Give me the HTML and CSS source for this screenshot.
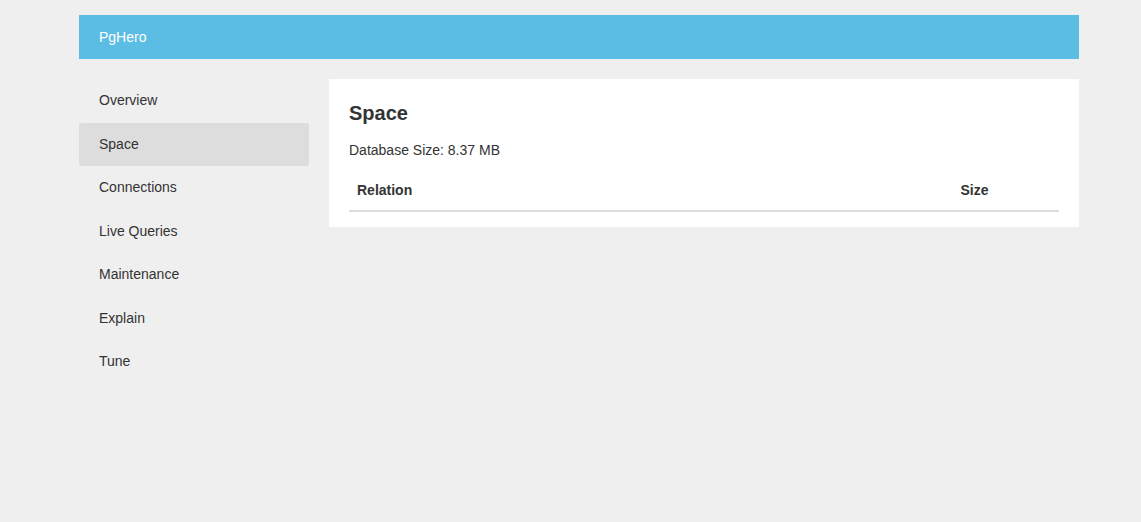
FILE: index.html
```html
<!DOCTYPE html>
<html>
<head>
<meta charset="utf-8">
<title>PgHero</title>
<link rel="stylesheet" href="styles.css">
</head>
<body>
<div class="container">
  <div class="header">PgHero</div>
  <div class="layout">
    <ul class="nav">
      <li><a class="nav-link">Overview</a></li>
      <li><a class="nav-link active">Space</a></li>
      <li><a class="nav-link">Connections</a></li>
      <li><a class="nav-link">Live Queries</a></li>
      <li><a class="nav-link">Maintenance</a></li>
      <li><a class="nav-link">Explain</a></li>
      <li><a class="nav-link">Tune</a></li>
    </ul>
    <div class="content">
      <h1 class="title">Space</h1>
      <p class="summary">Database Size: 8.37 MB</p>
      <table class="table">
        <thead>
          <tr>
            <th class="col-relation">Relation</th>
            <th class="col-size">Size</th>
          </tr>
        </thead>
      </table>
    </div>
  </div>
</div>
</body>
</html>
```

FILE: styles.css
```css
html, body {
  margin: 0;
  padding: 0;
}
body {
  background: #efefef;
  font-family: "Liberation Sans", Arial, sans-serif;
  font-size: 14px;
  line-height: 1.4;
  color: #333;
}
.container {
  width: 1000px;
  margin-left: 79px;
  padding-top: 15px;
}
.header {
  background: #5bbde4;
  color: #fff;
  height: 44px;
  line-height: 44px;
  padding: 0 20px;
}
.layout {
  display: flex;
  gap: 20px;
  margin-top: 20px;
  align-items: flex-start;
}
.nav {
  list-style: none;
  margin: 0;
  padding: 0;
  width: 230px;
  flex: none;
}
.nav-link {
  display: block;
  padding: 12px 20px;
  line-height: 19.5px;
  color: #333;
  border-radius: 2px;
}
.nav-link.active {
  background: #ddd;
}
.content {
  flex: 1;
  background: #fff;
  padding: 20px 20px 15px;
}
.title {
  margin: 0 0 14px;
  font-size: 20px;
  line-height: 28px;
  font-weight: bold;
}
.summary {
  margin: 0 0 12px;
}
.table {
  width: 100%;
  border-collapse: collapse;
}
.table th {
  text-align: left;
  padding: 8px 8px 10px;
  border-bottom: 2px solid #ddd;
  font-weight: bold;
}
.col-size {
  width: 15%;
}
```
